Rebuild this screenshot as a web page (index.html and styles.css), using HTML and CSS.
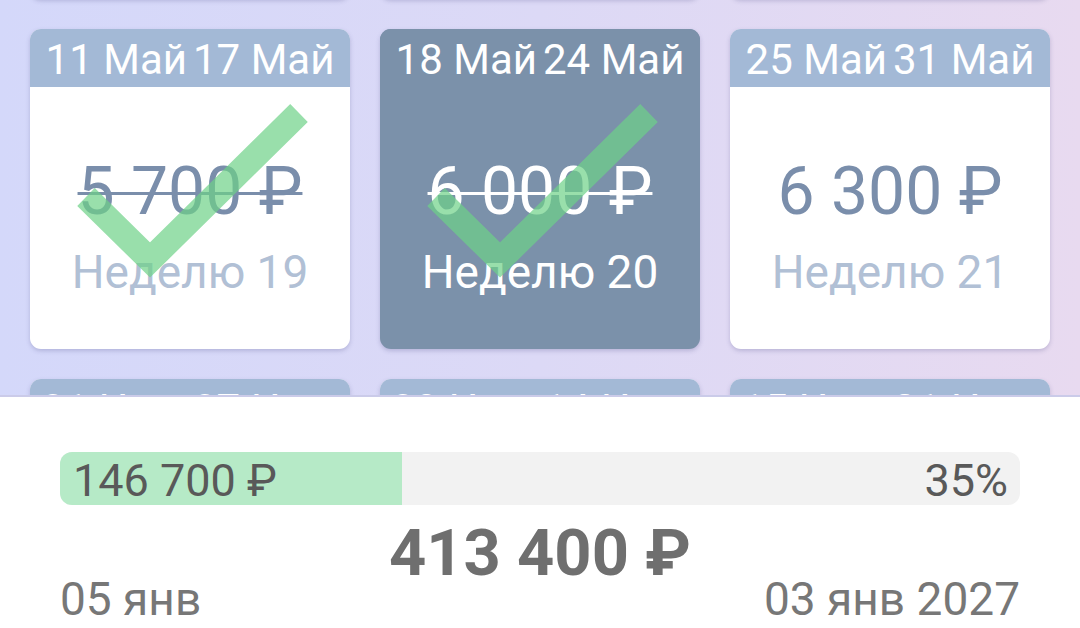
FILE: index.html
```html
<!DOCTYPE html>
<html lang="ru">
<head>
  <meta charset="UTF-8">
  <meta name="viewport" content="width=device-width, initial-scale=1.0">
  <title>Копилка 52 недели</title>
  <link rel="stylesheet" href="styles.css">
</head>
<body>
  <div class="weeks-view">
    <div class="weeks-grid">
      <div class="week done">
        <div class="week-header"><span>20 Апр</span><span>26 Апр</span></div>
        <div class="week-body"><div class="price">4 800 ₽</div><div class="week-num">Неделю 16</div></div>
      </div>
      <div class="week done">
        <div class="week-header"><span>27 Апр</span><span>03 Май</span></div>
        <div class="week-body"><div class="price">5 100 ₽</div><div class="week-num">Неделю 17</div></div>
      </div>
      <div class="week done">
        <div class="week-header"><span>04 Май</span><span>10 Май</span></div>
        <div class="week-body"><div class="price">5 400 ₽</div><div class="week-num">Неделю 18</div></div>
      </div>

      <div class="week done">
        <div class="week-header"><span>11 Май</span><span>17 Май</span></div>
        <div class="week-body"><div class="price">5 700 ₽</div><div class="week-num">Неделю 19</div></div>
        <svg class="check" viewBox="0 0 320 320"><polyline points="56,168 120,231 269,84" /></svg>
      </div>
      <div class="week done current">
        <div class="week-header"><span>18 Май</span><span>24 Май</span></div>
        <div class="week-body"><div class="price">6 000 ₽</div><div class="week-num">Неделю 20</div></div>
        <svg class="check" viewBox="0 0 320 320"><polyline points="56,168 120,231 269,84" /></svg>
      </div>
      <div class="week">
        <div class="week-header"><span>25 Май</span><span>31 Май</span></div>
        <div class="week-body"><div class="price">6 300 ₽</div><div class="week-num">Неделю 21</div></div>
      </div>

      <div class="week">
        <div class="week-header"><span>01 Июн</span><span>07 Июн</span></div>
        <div class="week-body"><div class="price">6 600 ₽</div><div class="week-num">Неделю 22</div></div>
      </div>
      <div class="week">
        <div class="week-header"><span>08 Июн</span><span>14 Июн</span></div>
        <div class="week-body"><div class="price">6 900 ₽</div><div class="week-num">Неделю 23</div></div>
      </div>
      <div class="week">
        <div class="week-header"><span>15 Июн</span><span>21 Июн</span></div>
        <div class="week-body"><div class="price">7 200 ₽</div><div class="week-num">Неделю 24</div></div>
      </div>
    </div>
  </div>

  <div class="summary">
    <div class="progress">
      <div class="progress-fill" style="width: 35.6%"></div>
      <div class="progress-labels">
        <span>146 700 ₽</span>
        <span>35%</span>
      </div>
    </div>
    <div class="total">413 400 ₽</div>
    <div class="dates">
      <span>05 янв</span>
      <span>03 янв 2027</span>
    </div>
  </div>
</body>
</html>
```

FILE: styles.css
```css
body {
  margin: 0;
  height: 628px;
  display: flex;
  flex-direction: column;
  font-family: Roboto, "DejaVu Sans", sans-serif;
  overflow: hidden;
}

.weeks-view {
  height: 395px;
  overflow: hidden;
  background: linear-gradient(90deg, #d4d8fa 0%, #dcd9f6 50%, #e8daf0 100%);
}

/* scrolled: the row above sits just out of view */
.weeks-grid {
  display: grid;
  grid-template-columns: repeat(3, 320px);
  grid-auto-rows: 320px;
  gap: 30px;
  padding: 0 30px;
  margin-top: -321px;
}

.week {
  position: relative;
  background-color: #fff;
  border-radius: 11px;
  overflow: hidden;
  box-shadow: 0 2px 4px rgba(70, 70, 130, 0.25);
  text-align: center;
}

.week-header {
  height: 58px;
  box-sizing: border-box;
  padding-top: 4px;
  line-height: 54px;
  font-size: 42px;
  color: #fff;
  background-color: #a3b9d6;
  display: flex;
  justify-content: center;
  gap: 6px;
  white-space: nowrap;
}

.week-body {
  padding-top: 67px;
}

.price {
  font-size: 66px;
  line-height: 76px;
  color: #7a8eab;
}

.week-num {
  margin-top: 16px;
  font-size: 46px;
  line-height: 52px;
  color: #b1c0d5;
}

.done .price {
  text-decoration: line-through;
  text-decoration-thickness: 3px;
}

.current {
  background-color: #7b91aa;
}

.current .week-header {
  background-color: #7b91aa;
}

.current .price,
.current .week-num {
  color: #fff;
}

.check {
  position: absolute;
  left: 0;
  top: 0;
  width: 320px;
  height: 320px;
}

.check polyline {
  fill: none;
  stroke: rgba(110, 210, 135, 0.7);
  stroke-width: 25;
  stroke-linejoin: miter;
}

.summary {
  flex: 1;
  background-color: #fff;
  border-top: 2px solid #cbcbe9;
  padding: 55px 60px 0;
}

.progress {
  position: relative;
  height: 53px;
  border-radius: 12px;
  overflow: hidden;
  background-color: #f2f2f2;
}

.progress-fill {
  position: absolute;
  left: 0;
  top: 0;
  bottom: 0;
  background-color: #b6eac7;
}

.progress-labels {
  position: relative;
  display: flex;
  justify-content: space-between;
  padding: 4px 12px 0 13px;
  font-size: 45px;
  line-height: 49px;
  color: #595959;
}

.total {
  margin-top: 20px;
  text-align: center;
  font-size: 65px;
  line-height: 56px;
  font-weight: bold;
  color: #6f6f6f;
}

.dates {
  margin-top: -2px;
  display: flex;
  justify-content: space-between;
  font-size: 46px;
  line-height: 40px;
  color: #777;
}
```
